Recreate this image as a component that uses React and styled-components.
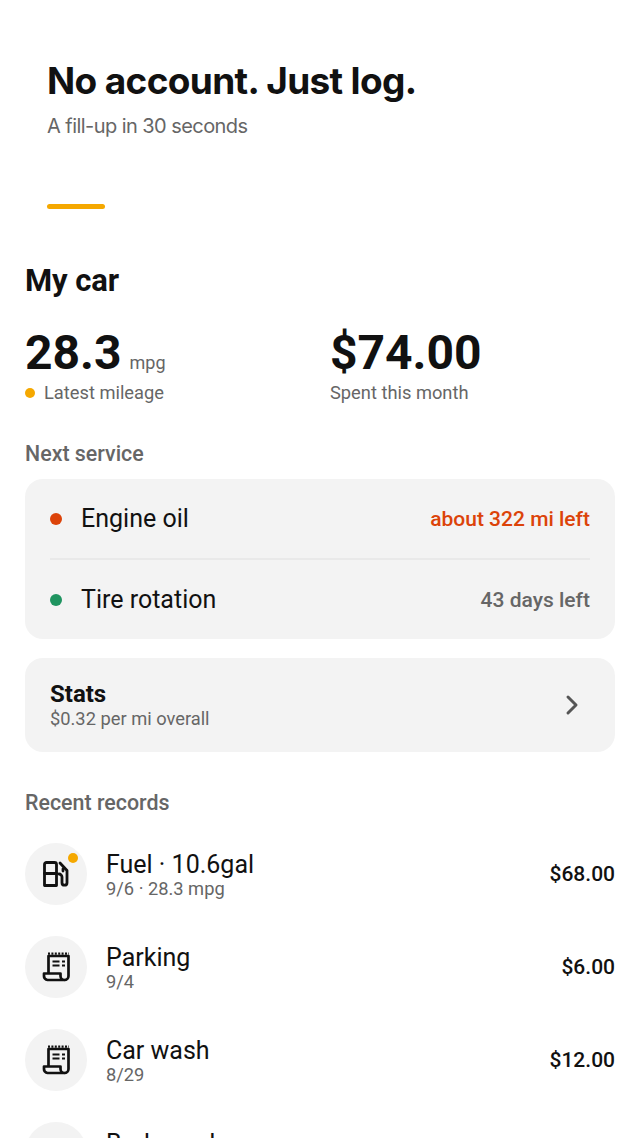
import React from 'react'
import styled, { createGlobalStyle } from 'styled-components'

const Global = createGlobalStyle`
  html, body { margin: 0; padding: 0; background: #fff; }
  body { font-family: Roboto, "Noto Sans", sans-serif; color: #111; height: 1138px; overflow: hidden; }
`
const Page = styled.div`
  width: 640px;
  height: 1138px;
  overflow: hidden;
  box-sizing: border-box;
  padding: 0 25px;
`
const Intro = styled.header`
  padding: 58px 0 0 22px;
  height: 254px;
  box-sizing: border-box;
`
const Headline = styled.h1`
  margin: 0;
  font-family: Inter, sans-serif;
  font-size: 37px;
  line-height: 46px;
  font-weight: 700;
  letter-spacing: -0.65px;
  color: #111;
`
const Tagline = styled.p`
  margin: 8px 0 0;
  font-family: Inter, sans-serif;
  font-size: 20px;
  line-height: 28px;
  letter-spacing: -0.56px;
  color: #666;
`
const Accent = styled.div`
  margin-top: 64px;
  width: 58px;
  height: 5px;
  border-radius: 3px;
  background: #f5a800;
`
const Title = styled.h2`
  margin: 0;
  font-size: 31px;
  line-height: 54px;
  font-weight: 700;
  letter-spacing: -0.1px;
`
const Metrics = styled.div`
  display: grid;
  grid-template-columns: 305px 1fr;
  margin-top: 16px;
`
const Metric = styled.div``
const Value = styled.div`
  font-size: 48px;
  height: 58px;
  line-height: 58px;
  font-weight: 700;
  white-space: nowrap;
`
const Unit = styled.span`
  margin-left: 8px;
  font-size: 18px;
  font-weight: 400;
  color: #666;
`
const Caption = styled.div`
  display: flex;
  align-items: center;
  gap: 9px;
  font-size: 18.3px;
  line-height: 24px;
  color: #666;
  margin-top: -1px;
`
const Dot = styled.span`
  width: ${p => p.$size}px;
  height: ${p => p.$size}px;
  border-radius: 50%;
  flex: none;
  background: ${p => p.$color};
`
const Label = styled.div`
  font-size: 21.4px;
  line-height: 28px;
  font-weight: 500;
  color: #666;
  margin-top: ${p => p.$top}px;
`
const Card = styled.section`
  background: #f3f3f3;
  border-radius: 18px;
  padding: 0 25px;
  margin-top: ${p => p.$top}px;
`
const ServiceRow = styled.div`
  display: flex;
  align-items: center;
  height: 79px;
  & + & { border-top: 2px solid #e9e9e9; }
`
const ServiceName = styled.span`
  flex: 1;
  margin-left: 19px;
  font-size: 25px;
`
const ServiceLeft = styled.span`
  font-size: 21px;
  font-weight: 500;
  color: ${p => p.$color};
`
const StatsCard = styled(Card)`
  display: flex;
  align-items: center;
  justify-content: space-between;
  height: 94px;
`
const StatsTitle = styled.div`
  font-size: 24px;
  line-height: 26px;
  font-weight: 700;
`
const StatsSub = styled.div`
  font-size: 18.3px;
  line-height: 23px;
  color: #666;
`
const ChevronWrap = styled.span`
  display: flex;
  margin-right: 11px;
`
const Records = styled.div`
  display: flex;
  flex-direction: column;
  gap: 31px;
  margin-top: 26px;
`
const Record = styled.div`
  display: flex;
  align-items: center;
  height: 62px;
`
const Avatar = styled.div`
  position: relative;
  width: 62px;
  height: 62px;
  border-radius: 50%;
  background: #f3f3f3;
  flex: none;
  display: flex;
  align-items: center;
  justify-content: center;
`
const Badge = styled.span`
  position: absolute;
  top: 10px;
  right: 9px;
  width: 10px;
  height: 10px;
  border-radius: 50%;
  background: #f5a800;
`
const RecordText = styled.div`
  flex: 1;
  align-self: flex-start;
  margin-left: 19px;
  padding-top: 8px;
`
const RecordName = styled.div`
  font-size: 25px;
  line-height: 27px;
`
const RecordSub = styled.div`
  font-size: 18.3px;
  line-height: 21px;
  color: #666;
`
const Amount = styled.div`
  font-size: 21px;
  font-weight: 500;
`

const FuelIcon = () => (
  <svg width="26" height="26" viewBox="0 0 26 26" fill="none" stroke="#111" strokeWidth="2.8" strokeLinejoin="round" strokeLinecap="round">
    <path d="M1.5 24.5V3.5a2 2 0 0 1 2-2h8a2 2 0 0 1 2 2v21z" />
    <path d="M1.5 12.5h12" />
    <path d="M17 2l7 7.5v12.2a2.5 2.5 0 0 1-5 0V16a3 3 0 0 0-3-3" />
    <path d="M20 8v2" />
  </svg>
)

const ReceiptIcon = () => (
  <svg width="28" height="30" viewBox="0 0 28 30" fill="none" stroke="#111" strokeWidth="2.7" strokeLinejoin="round">
    <path d="M6.5 21V4h20v20a4 4 0 0 1-4 4" />
    <path d="M6 1.6h21" strokeWidth="2.2" strokeDasharray="2 1.4" />
    <path d="M2 21.5h16.5V24a4 4 0 0 0 4 4H5.5A3.8 3.8 0 0 1 2 24z" />
    <path d="M10.5 9.5h7M10.5 13.5h7M20 9.5h3M20 13.5h3" strokeWidth="2.2" />
  </svg>
)

const Chevron = () => (
  <svg width="14" height="22" viewBox="0 0 14 22" fill="none" stroke="#555" strokeWidth="3" strokeLinecap="round" strokeLinejoin="round">
    <path d="M3 3l8 8-8 8" />
  </svg>
)

const records = [
  { name: 'Fuel · 10.6gal', sub: '9/6 · 28.3 mpg', amount: '$68.00', fuel: true },
  { name: 'Parking', sub: '9/4', amount: '$6.00' },
  { name: 'Car wash', sub: '8/29', amount: '$12.00' },
  { name: 'Body work' },
]

export default function App() {
  return (
    <Page>
      <Global />
      <Intro>
        <Headline>No account. Just log.</Headline>
        <Tagline>A fill-up in 30 seconds</Tagline>
        <Accent />
      </Intro>
      <Title>My car</Title>
      <Metrics>
        <Metric>
          <Value>28.3<Unit>mpg</Unit></Value>
          <Caption><Dot $size={10} $color="#f5a800" />Latest mileage</Caption>
        </Metric>
        <Metric>
          <Value>$74.00</Value>
          <Caption>Spent this month</Caption>
        </Metric>
      </Metrics>
      <Label $top={35}>Next service</Label>
      <Card $top={11}>
        <ServiceRow>
          <Dot $size={12} $color="#dc4309" />
          <ServiceName>Engine oil</ServiceName>
          <ServiceLeft $color="#dc4309">about 322 mi left</ServiceLeft>
        </ServiceRow>
        <ServiceRow>
          <Dot $size={12} $color="#1f9460" />
          <ServiceName>Tire rotation</ServiceName>
          <ServiceLeft $color="#666">43 days left</ServiceLeft>
        </ServiceRow>
      </Card>
      <StatsCard $top={19}>
        <div>
          <StatsTitle>Stats</StatsTitle>
          <StatsSub>$0.32 per mi overall</StatsSub>
        </div>
        <ChevronWrap><Chevron /></ChevronWrap>
      </StatsCard>
      <Label $top={37}>Recent records</Label>
      <Records>
        {records.map(r => (
          <Record key={r.name}>
            <Avatar>
              {r.fuel ? <FuelIcon /> : <ReceiptIcon />}
              {r.fuel && <Badge />}
            </Avatar>
            <RecordText>
              <RecordName>{r.name}</RecordName>
              {r.sub && <RecordSub>{r.sub}</RecordSub>}
            </RecordText>
            {r.amount && <Amount>{r.amount}</Amount>}
          </Record>
        ))}
      </Records>
    </Page>
  )
}
